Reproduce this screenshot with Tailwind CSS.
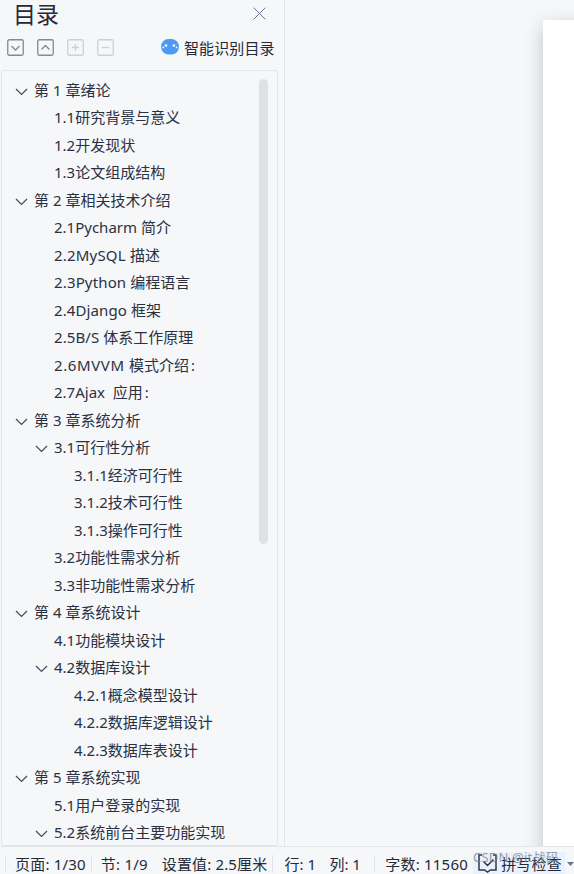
<!DOCTYPE html>
<html lang="zh-CN">
<head>
<meta charset="utf-8">
<title>目录</title>
<script src="https://cdn.jsdelivr.net/npm/@tailwindcss/browser@4"></script>
</head>
<body class="w-[574px] h-[874px] overflow-hidden bg-[#f5f7f9] text-[#2b3142] font-['Noto_Sans','Noto_Sans_CJK_SC',sans-serif] text-[15px] whitespace-nowrap">
<svg class="hidden"><symbol id="chev" viewBox="0 0 13 8"><path d="M1 1l5.500 5.500L12 1" fill="none" stroke="#454b5c" stroke-width="1.200"/></symbol></svg>
<div class="flex flex-col w-[574px] h-[874px]">
<main class="flex h-[846px] shrink-0 overflow-hidden">
<aside class="flex flex-col w-[285px] shrink-0 border-r border-[#e2e5ea] pl-px">
<header class="flex items-center justify-between h-[30px] pl-3 pr-[18px]"><h1 class="text-[23px] leading-[30px] -mt-[2px] text-[#252a38]">目录</h1><svg class="w-[13px] h-[13px] -mt-[3px]" viewBox="0 0 13 13"><path d="M.7.7l11.600 11.600M12.300.7L.7 12.300" stroke="#68758e" stroke-width="1" fill="none"/></svg></header>
<div class="flex items-center h-[40px] pl-[6px] pb-[5px] gap-[13px]"><svg class="w-[17px] h-[17px]" viewBox="0 0 17 17" fill="none" stroke="#858a92" stroke-width="1.300"><rect x=".75" y=".75" width="15.500" height="15.500" rx="1.500"/><path d="M4.500 7l4 4 4-4"/></svg><svg class="w-[17px] h-[17px]" viewBox="0 0 17 17" fill="none" stroke="#858a92" stroke-width="1.300"><rect x=".75" y=".75" width="15.500" height="15.500" rx="1.500"/><path d="M4.500 10.500l4-4 4 4"/></svg><svg class="w-[17px] h-[17px]" viewBox="0 0 17 17" fill="none" stroke="#cdd0d3" stroke-width="1.300"><rect x=".75" y=".75" width="15.500" height="15.500" rx="1.500"/><path d="M5 8.500h7M8.500 5v7"/></svg><svg class="w-[17px] h-[17px]" viewBox="0 0 17 17" fill="none" stroke="#cdd0d3" stroke-width="1.300"><rect x=".75" y=".75" width="15.500" height="15.500" rx="1.500"/><path d="M5 8.500h7"/></svg><div class="flex items-center gap-[5px] ml-[34px]"><svg class="w-[18px] h-[16px] -mt-px" viewBox="0 0 18 16"><rect width="18" height="15.500" rx="7.700" fill="#4c9af3"/><g fill="#fff"><circle cx="5" cy="6.500" r="1.300"/><circle cx="12.900" cy="6.500" r="1.300"/><circle cx="2.300" cy="8.400" r=".9"/><circle cx="15.600" cy="8.400" r=".9"/></g></svg><span class="leading-5 tracking-[0.1px] text-[#252a38]">智能识别目录</span></div></div>
<div class="flex justify-between w-[277px] h-[776px] border border-[#e2e5ea] rounded-[3px] pt-[6px] overflow-hidden">
<ul class="-mt-[0.300px] [&>li]:whitespace-pre [&>li]:flex [&>li]:items-center [&>li]:h-[27.500px] [&>li]:leading-[27px] [&_svg]:w-[13px] [&_svg]:h-2 [&_svg]:mr-[6px] [&_svg]:mt-[3px]">
<li class="pl-[13px]"><svg><use href="#chev"/></svg>第 1 章绪论</li>
<li class="pl-[52px]">1.1研究背景与意义</li>
<li class="pl-[52px]">1.2开发现状</li>
<li class="pl-[52px]">1.3论文组成结构</li>
<li class="pl-[13px]"><svg><use href="#chev"/></svg>第 2 章相关技术介绍</li>
<li class="pl-[52px]">2.1Pycharm 简介</li>
<li class="pl-[52px]"><span class="tracking-[0.2px]">2.2MySQL </span>描述</li>
<li class="pl-[52px]"><span class="tracking-[0.150px]">2.3Python </span>编程语言</li>
<li class="pl-[52px]"><span class="tracking-[0.1px]">2.4Django </span>框架</li>
<li class="pl-[52px]"><span class="tracking-[0.1px]">2.5B/S </span>体系工作原理</li>
<li class="pl-[52px]"><span class="tracking-[0.600px]">2.6MVVM </span>模式介绍<span class="pl-[2px]">:</span></li>
<li class="pl-[52px]">2.7Ajax  应用<span class="pl-[2px]">:</span></li>
<li class="pl-[13px]"><svg><use href="#chev"/></svg>第 3 章系统分析</li>
<li class="pl-[33px]"><svg><use href="#chev"/></svg>3.1可行性分析</li>
<li class="pl-[72px]">3.1.1经济可行性</li>
<li class="pl-[72px]">3.1.2技术可行性</li>
<li class="pl-[72px]">3.1.3操作可行性</li>
<li class="pl-[52px]">3.2功能性需求分析</li>
<li class="pl-[52px]">3.3非功能性需求分析</li>
<li class="pl-[13px]"><svg><use href="#chev"/></svg>第 4 章系统设计</li>
<li class="pl-[52px]">4.1功能模块设计</li>
<li class="pl-[33px]"><svg><use href="#chev"/></svg>4.2数据库设计</li>
<li class="pl-[72px]">4.2.1概念模型设计</li>
<li class="pl-[72px]">4.2.2数据库逻辑设计</li>
<li class="pl-[72px]">4.2.3数据库表设计</li>
<li class="pl-[13px]"><svg><use href="#chev"/></svg>第 5 章系统实现</li>
<li class="pl-[52px]">5.1用户登录的实现</li>
<li class="pl-[33px]"><svg><use href="#chev"/></svg>5.2系统前台主要功能实现</li>
</ul>
<div class="w-[9px] h-[465px] mt-[2px] mr-[9px] rounded-full bg-[#dee2e5]"></div>
</div>
</aside>
<section class="flex-1 pt-5 pl-[258px] overflow-hidden"><div class="w-[300px] h-[1000px] bg-white shadow-[0_6px_18px_rgba(0,0,0,0.210)]"></div></section>
</main>
<footer class="relative flex items-center h-[28px] border-t border-[#e2e5ea] pt-[6px] leading-5 text-[#252a38]"><i class="w-px h-[18px] bg-[#dfe3e8] ml-[5px]"></i><span class="ml-[9px] w-[76px] tracking-[0.200px]">页面: 1/30</span><i class="w-px h-[18px] bg-[#dfe3e8]"></i><span class="ml-[9px] w-[61px] tracking-[0.200px]">节: 1/9</span><span class="w-[110px] tracking-[0.150px]">设置值: 2.5厘米</span><i class="w-px h-[18px] bg-[#dfe3e8]"></i><span class="ml-[12px] w-[45px]">行: 1</span><span class="w-[45px]">列: 1</span><i class="w-px h-[18px] bg-[#dfe3e8]"></i><span class="ml-[10px] w-[88px] tracking-[0.200px]">字数: 11560</span><div class="flex items-center bg-[#e8f1fc] w-[92px] h-[24px] pl-[5px]"><svg class="w-[19px] h-[19px] mr-[4px] shrink-0" viewBox="0 0 19 19" fill="none" stroke="#30384a" stroke-width="1.500"><path d="M4 1H1v15h5.500l3 2 3-2H18V1h-3M5.500 7.500l4 4 6-6"/></svg><span class="tracking-[0.200px]">拼写检查</span></div><svg class="w-[7px] h-[4px] ml-[2px] shrink-0" viewBox="0 0 7 4"><path d="M0 0h7L3.500 4z" fill="#68758e"/></svg><span class="absolute left-[473px] top-0 text-[13px] tracking-[0.200px] leading-5 text-[#777d87]/75">CSDN @it战码</span></footer>
</div>
</body>
</html>
